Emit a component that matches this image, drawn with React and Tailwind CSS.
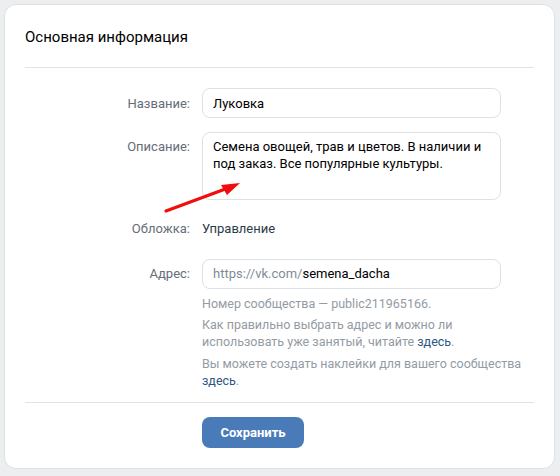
import { useState } from 'react'

const labelClass = 'w-[197px] shrink-0 pr-[12px] text-right text-[13px] leading-[17px] text-[#656d78]'
const inputClass =
  'w-[299px] rounded-[8px] border border-[#dce1e6] bg-white px-[10px] text-[13px] text-black outline-none'

function Arrow() {
  return (
    <svg className="pointer-events-none absolute left-0 top-0" width="560" height="476">
      <line x1="166" y1="211" x2="228" y2="188" stroke="#f20c0c" strokeWidth="3.2" strokeLinecap="round" />
      <polygon points="240,183 221,185 227,195" fill="#f20c0c" />
    </svg>
  )
}

function App() {
  const [name, setName] = useState('Луковка')
  const [description, setDescription] = useState(
    'Семена овощей, трав и цветов. В наличии и под заказ. Все популярные культуры.'
  )

  return (
    <div
      className="relative h-[476px] w-[560px] bg-[#edeef0] pl-[4px] pr-[5px] pt-[4px]"
      style={{ fontFamily: 'Roboto, "Noto Sans", sans-serif' }}
    >
      <div className="h-[465px] rounded-[12px] border border-[#dce1e6] bg-white">
        <div className="px-[20px] pb-[20px] pt-[22px] text-[15px] leading-[20px] text-black">
          Основная информация
        </div>
        <div className="mx-[20px] h-px bg-[#e1e3e6]" />

        <div className="mt-[20px] flex items-center">
          <div className={labelClass}>Название:</div>
          <input
            className={`${inputClass} h-[30px]`}
            value={name}
            onChange={(event) => setName(event.target.value)}
          />
        </div>

        <div className="mt-[14px] flex items-start">
          <div className={`${labelClass} pt-[6px]`}>Описание:</div>
          <textarea
            className={`${inputClass} h-[68px] resize-none py-[5px] leading-[17px]`}
            value={description}
            onChange={(event) => setDescription(event.target.value)}
          />
        </div>

        <div className="mt-[20px] flex items-center">
          <div className={labelClass}>Обложка:</div>
          <div className="text-[13px] leading-[17px] text-[#2c3a4a]">Управление</div>
        </div>

        <div className="mt-[22px] flex items-start">
          <div className={`${labelClass} pt-[6px]`}>Адрес:</div>
          <div className="w-[345px]">
            <div className={`${inputClass} flex h-[30px] items-center`}>
              <span className="text-[#818c99]">https://vk.com/</span>
              <span>semena_dacha</span>
            </div>
            <div className="mt-[6px] text-[12.5px] leading-[17px] text-[#939ba4]">
              <p>Номер сообщества — public211965166.</p>
              <p className="mt-[4px]">
                Как правильно выбрать адрес и можно ли
                <br />
                использовать уже занятый, читайте <span className="text-[#2a5885]">здесь</span>.
              </p>
              <p className="mt-[5px]">
                Вы можете создать наклейки для вашего сообщества
                <br />
                <span className="text-[#2a5885]">здесь</span>.
              </p>
            </div>
          </div>
        </div>

        <div className="mx-[20px] mt-[13px] h-px bg-[#e1e3e6]" />

        <div className="mt-[14px] pl-[197px]">
          <button
            type="button"
            className="h-[31px] w-[102px] rounded-[8px] bg-[#4a7bb9] text-[13px] font-bold text-white"
          >
            Сохранить
          </button>
        </div>
      </div>
      <Arrow />
    </div>
  )
}

export default App
